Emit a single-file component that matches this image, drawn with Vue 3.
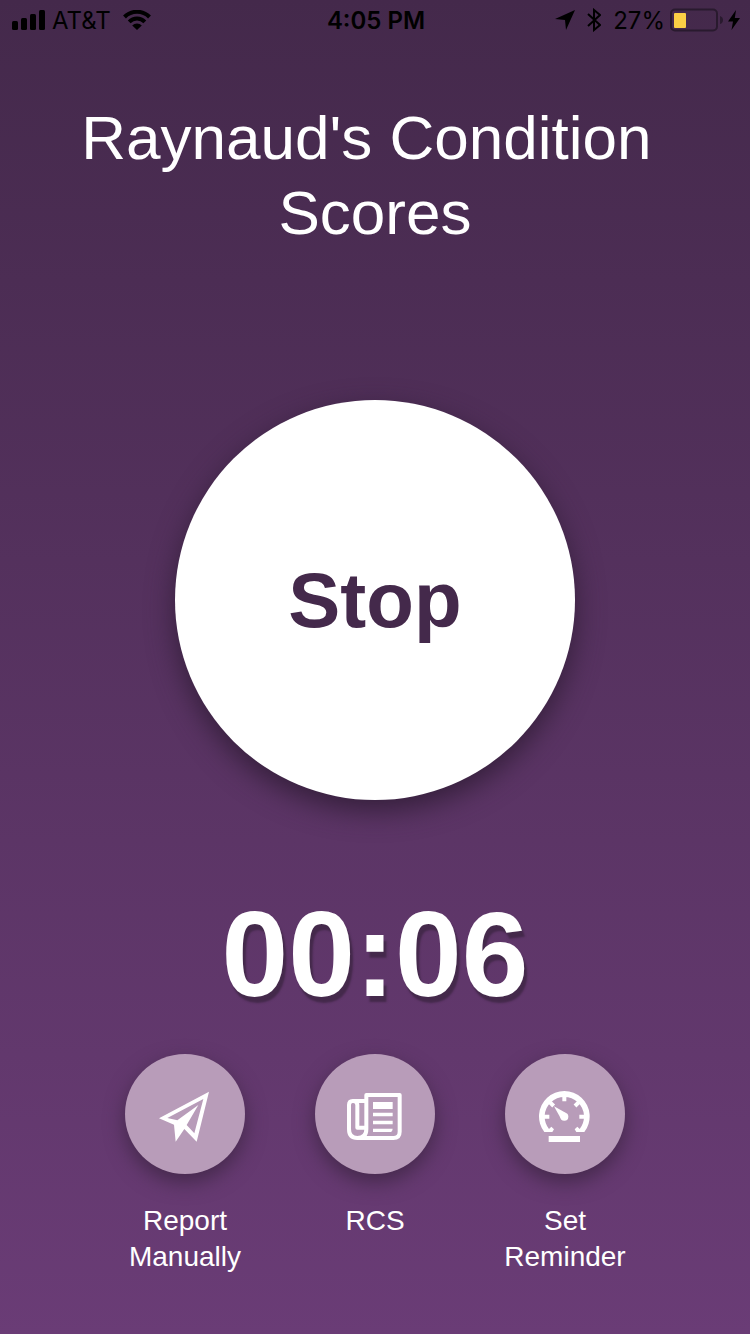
<script setup>
import { computed, onBeforeUnmount, ref } from 'vue'

const seconds = ref(6)
const running = ref(false)
let timer = null

const pad = (value) => String(value).padStart(2, '0')
const elapsed = computed(() => `${pad(Math.floor(seconds.value / 60))}:${pad(seconds.value % 60)}`)

function toggle() {
  running.value = !running.value
  clearInterval(timer)
  if (running.value) {
    timer = setInterval(() => seconds.value++, 1000)
  }
}

onBeforeUnmount(() => clearInterval(timer))
</script>

<template>
  <div class="screen">
    <header class="status">
      <div class="status-group">
        <svg class="signal" viewBox="0 0 33 20" aria-hidden="true">
          <rect x="0" y="11" width="6" height="9" rx="1.5" />
          <rect x="9" y="8" width="6" height="12" rx="1.5" />
          <rect x="18" y="4" width="6" height="16" rx="1.5" />
          <rect x="27" y="0" width="6" height="20" rx="1.5" />
        </svg>
        <span class="label">AT&amp;T</span>
        <svg class="wifi" viewBox="0 0 28 20" aria-hidden="true">
          <path d="M1.500 7 A17.500 17.500 0 0 1 26.500 7" />
          <path d="M6.200 11.800 A11 11 0 0 1 21.800 11.800" />
          <path class="solid" d="M14 20 L9.200 15.400 A6.800 6.800 0 0 1 18.800 15.400 Z" />
        </svg>
      </div>
      <time class="clock label">4:05 PM</time>
      <div class="status-group status-right">
        <svg class="location" viewBox="0 0 20 20" aria-hidden="true">
          <path d="M20 0 L11 20 L10 10 L0 9 Z" />
        </svg>
        <svg class="bluetooth" viewBox="0 0 14 24" aria-hidden="true">
          <path d="M1 6 L13 17 L7 22 V2 L13 7 L1 18" />
        </svg>
        <span class="percent label">27%</span>
        <svg class="battery" viewBox="0 0 53 24" aria-hidden="true">
          <rect class="case" x="1" y="1.500" width="46" height="21" rx="4" />
          <rect class="charge" x="4" y="5" width="12" height="15" rx="1" />
          <path class="cap" d="M50 8 Q53 9 53 12 Q53 15 50 16 Z" />
        </svg>
        <svg class="bolt" viewBox="0 0 12 20" aria-hidden="true">
          <path d="M8 0 L0 11.500 H5 L3.500 20 L12 8 H6.800 Z" />
        </svg>
      </div>
    </header>

    <main class="content">
      <h1 class="title">Raynaud's Condition&nbsp;<br />Scores</h1>

      <button class="stop" type="button" @click="toggle">Stop</button>

      <div class="timer" role="timer">{{ elapsed }}</div>

      <nav class="actions">
        <button class="action" type="button">
          <span class="disc">
            <svg class="icon" viewBox="45 27 180 180" aria-hidden="true">
              <path
                fill-rule="evenodd"
                d="M57 130 L207 50 L170 200 L133 162 L107 200 L102 149 Z M82 129 L112 136 L175 90 L140 150 L163 175 L190 72 Z"
              />
            </svg>
          </span>
          <span>Report Manually</span>
        </button>
        <button class="action" type="button">
          <span class="disc">
            <svg class="icon" viewBox="45 27 180 180" aria-hidden="true">
              <g class="line">
                <path d="M82 189 H190 Q209 189 209 170 V60 H109 V162 Q109 189 82 189 Q57 189 57 162 V90 Q57 78 68 78 H109" />
                <path d="M70 78 Q82 79 82 90 V158 H105" />
              </g>
              <path d="M129 81 H188 V102 H129 Z M129 113 H188 V124 H129 Z M129 137 H188 V148 H129 Z M129 161 H188 Q187 171 180 171 H129 Z" />
            </svg>
          </span>
          <span>RCS</span>
        </button>
        <button class="action" type="button">
          <span class="disc">
            <svg class="icon" viewBox="45 27 180 180" aria-hidden="true">
              <path
                fill-rule="evenodd"
                d="M73 171 A76 76 0 1 1 193 171 H169 L164 163 L172 155 L179 162 A59 59 0 1 0 87 162 L94 155 L102 163 L97 171 Z"
              />
              <path
                class="ticks"
                d="M133 60 V79 M68 125 H88 M178 125 H198 M87 79 L101 93 M179 79 L165 93"
              />
              <path d="M102 94 L138 114 L122 130 Z" />
              <circle cx="133" cy="125" r="12" />
              <rect x="86" y="183" width="94" height="18" />
            </svg>
          </span>
          <span>Set Reminder</span>
        </button>
      </nav>
    </main>
  </div>
</template>

<style>
body {
  background: #6a3c76;
}
</style>

<style scoped>
.screen {
  box-sizing: border-box;
  min-height: 100vh;
  background: linear-gradient(#44294b, #6a3c76);
  color: #fff;
  font-family: "Liberation Sans", Arial, Helvetica, sans-serif;
}

.status {
  display: grid;
  grid-template-columns: 1fr auto 1fr;
  align-items: center;
  height: 40px;
  padding: 0 10px 0 12px;
  color: #000;
  font-family: Inter, Roboto, sans-serif;
  font-size: 24px;
  line-height: 38px;
}

.label {
  padding-top: 2px;
}

.status-group {
  display: flex;
  align-items: center;
}

.status-right {
  justify-content: flex-end;
}

.status svg {
  display: block;
  flex: none;
}

.signal {
  width: 33px;
  height: 20px;
  margin-right: 7px;
}

.wifi {
  width: 28px;
  height: 20px;
  margin-left: 12px;
  fill: none;
  stroke: #000;
  stroke-width: 4;
}

.wifi .solid {
  fill: #000;
  stroke: none;
}

.clock {
  font-weight: 600;
}

.location {
  width: 20px;
  height: 20px;
  margin-right: 12px;
}

.bluetooth {
  width: 14px;
  height: 24px;
  margin-right: 12px;
  fill: none;
  stroke: #000;
  stroke-width: 2;
}

.percent {
  margin-right: 5px;
}

.battery {
  width: 53px;
  height: 24px;
  margin-right: 5px;
}

.case {
  fill: none;
  stroke: #291a2e;
  stroke-width: 2;
}

.charge {
  fill: #fbcf45;
}

.cap {
  fill: #291a2e;
}

.bolt {
  width: 12px;
  height: 20px;
}

.content {
  display: flex;
  flex-direction: column;
  align-items: center;
  padding: 60px 24px;
}

.title {
  margin: 0;
  font-size: 62px;
  font-weight: 400;
  line-height: 75px;
  text-align: center;
}

button {
  padding: 0;
  border: 0;
  font: inherit;
  cursor: pointer;
}

.stop {
  width: 400px;
  height: 400px;
  margin-top: 150px;
  border-radius: 50%;
  background: #fff;
  box-shadow: 0 10px 28px #341f3a;
  color: #44294b;
  font-size: 78px;
  font-weight: 700;
}

.timer {
  margin-top: 94px;
  font-size: 120px;
  font-weight: 700;
  line-height: 120px;
  text-shadow: 3px 6px 2px #44294b;
}

.actions {
  display: flex;
  align-items: flex-start;
  gap: 70px;
  margin-top: 40px;
}

.action {
  display: flex;
  flex-direction: column;
  align-items: center;
  gap: 29px;
  width: 120px;
  background: none;
  color: #fff;
  font-size: 28px;
  line-height: 36px;
  text-align: center;
}

.disc {
  display: grid;
  place-items: center;
  width: 120px;
  height: 120px;
  border-radius: 50%;
  background: #b89cb9;
  box-shadow: 0 8px 20px #44294b;
}

.icon {
  width: 60px;
  height: 60px;
  fill: #fff;
}

.line {
  fill: none;
  stroke: #fff;
  stroke-width: 12;
  stroke-linejoin: round;
}

.ticks {
  fill: none;
  stroke: #fff;
  stroke-width: 12;
}
</style>
